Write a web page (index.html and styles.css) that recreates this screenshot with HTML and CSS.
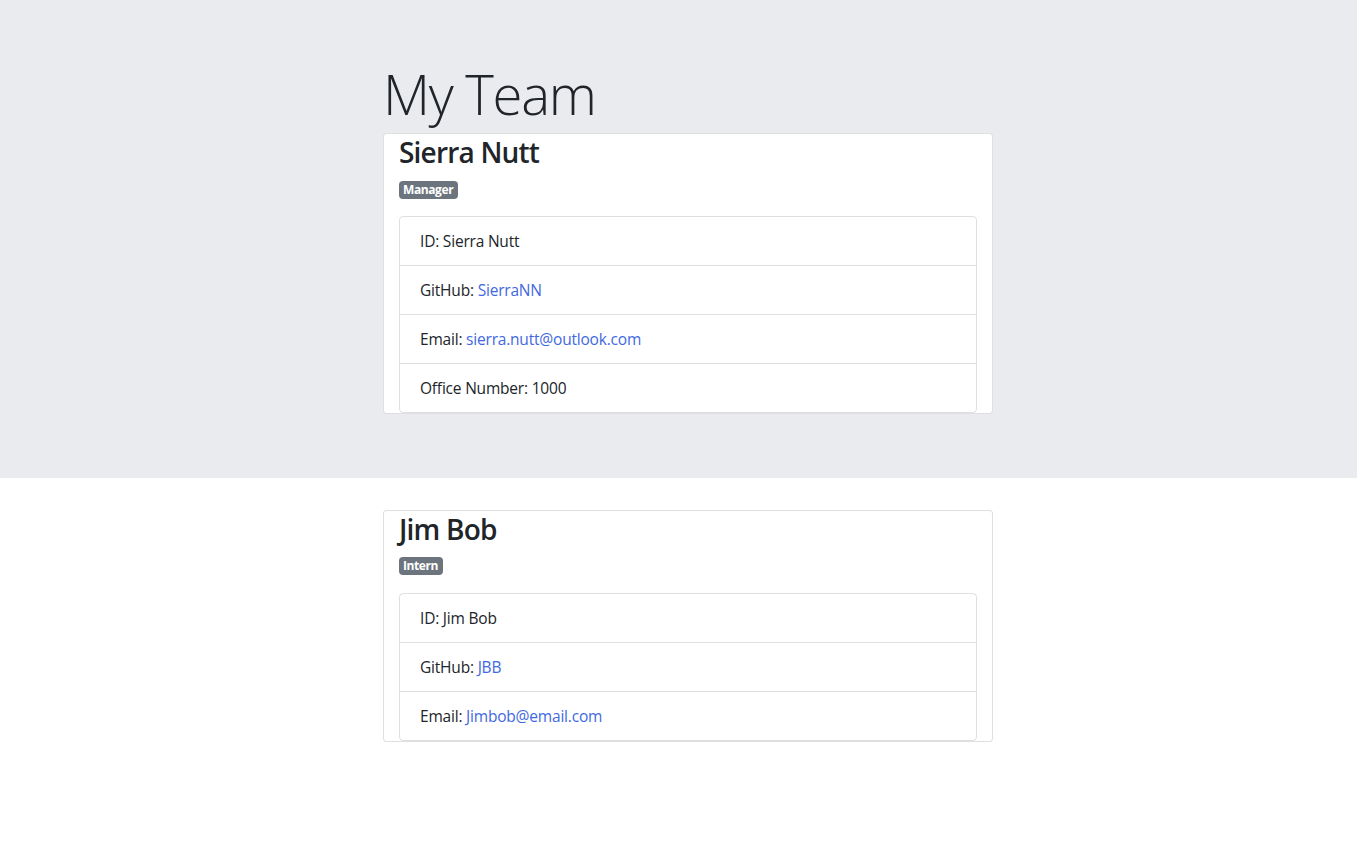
FILE: index.html
```html
<!DOCTYPE html>
<html lang="en">
<head>
<meta charset="utf-8">
<title>My Team</title>
<link rel="stylesheet" href="styles.css">
</head>
<body>
<header class="jumbotron">
  <div class="container">
    <h1 class="display">My Team</h1>
    <div class="card">
      <div class="card-inner">
        <h3 class="card-title">Sierra Nutt</h3>
        <p class="role"><span class="badge">Manager</span></p>
        <ul class="list-group">
          <li class="list-item">ID: Sierra Nutt</li>
          <li class="list-item">GitHub: <a href="#">SierraNN</a></li>
          <li class="list-item">Email: <a href="#">sierra.nutt@outlook.com</a></li>
          <li class="list-item">Office Number: 1000</li>
        </ul>
      </div>
    </div>
  </div>
</header>
<main class="team">
  <div class="container">
    <div class="card">
      <div class="card-inner">
        <h3 class="card-title">Jim Bob</h3>
        <p class="role"><span class="badge">Intern</span></p>
        <ul class="list-group">
          <li class="list-item">ID: Jim Bob</li>
          <li class="list-item">GitHub: <a href="#">JBB</a></li>
          <li class="list-item">Email: <a href="#">Jimbob@email.com</a></li>
        </ul>
      </div>
    </div>
  </div>
</main>
</body>
</html>
```
FILE: styles.css
```css
* { box-sizing: border-box; }
html, body { margin: 0; padding: 0; }
body {
  font-family: "Segoe UI", "Open Sans", "Noto Sans", sans-serif;
  font-size: 16px;
  line-height: 1.5;
  color: #212529;
  background: #fff;
}
.container {
  width: 610px;
  margin-left: 383px;
}
.jumbotron {
  background: #e9ebef;
  padding: 62px 0 64px;
}
.display {
  font-size: 54.5px;
  font-weight: 300;
  line-height: 1.2;
  margin: 0 0 6px;
  letter-spacing: -1.3px;
}
.team {
  padding-top: 32px;
}
.card {
  background: #fff;
  border: 1px solid rgba(0,0,0,.125);
  border-radius: 4px;
}
.card-inner {
  padding: 0 15px;
}
.card-title {
  font-size: 28px;
  font-weight: 600;
  line-height: 1.2;
  margin: 0 0 6px;
  padding-top: 2px;
  letter-spacing: -0.8px;
}
.role {
  margin: 0 0 16px;
  line-height: 24px;
}
.badge {
  display: inline-block;
  background: #6c757d;
  color: #fff;
  font-size: 12px;
  font-weight: 700;
  line-height: 1;
  padding: 3px 5px 3px 4px;
  border-radius: 4px;
  vertical-align: middle;
  letter-spacing: -0.4px;
}
.list-group {
  list-style: none;
  margin: 0;
  padding: 0;
  border: 1px solid rgba(0,0,0,.125);
  border-radius: 4px;
}
.list-item {
  padding: 12px 20px;
  line-height: 24px;
  font-size: 15.5px;
  letter-spacing: -0.2px;
}
.list-item + .list-item {
  border-top: 1px solid rgba(0,0,0,.125);
}
a {
  color: #4169e1;
  text-decoration: none;
}
```
